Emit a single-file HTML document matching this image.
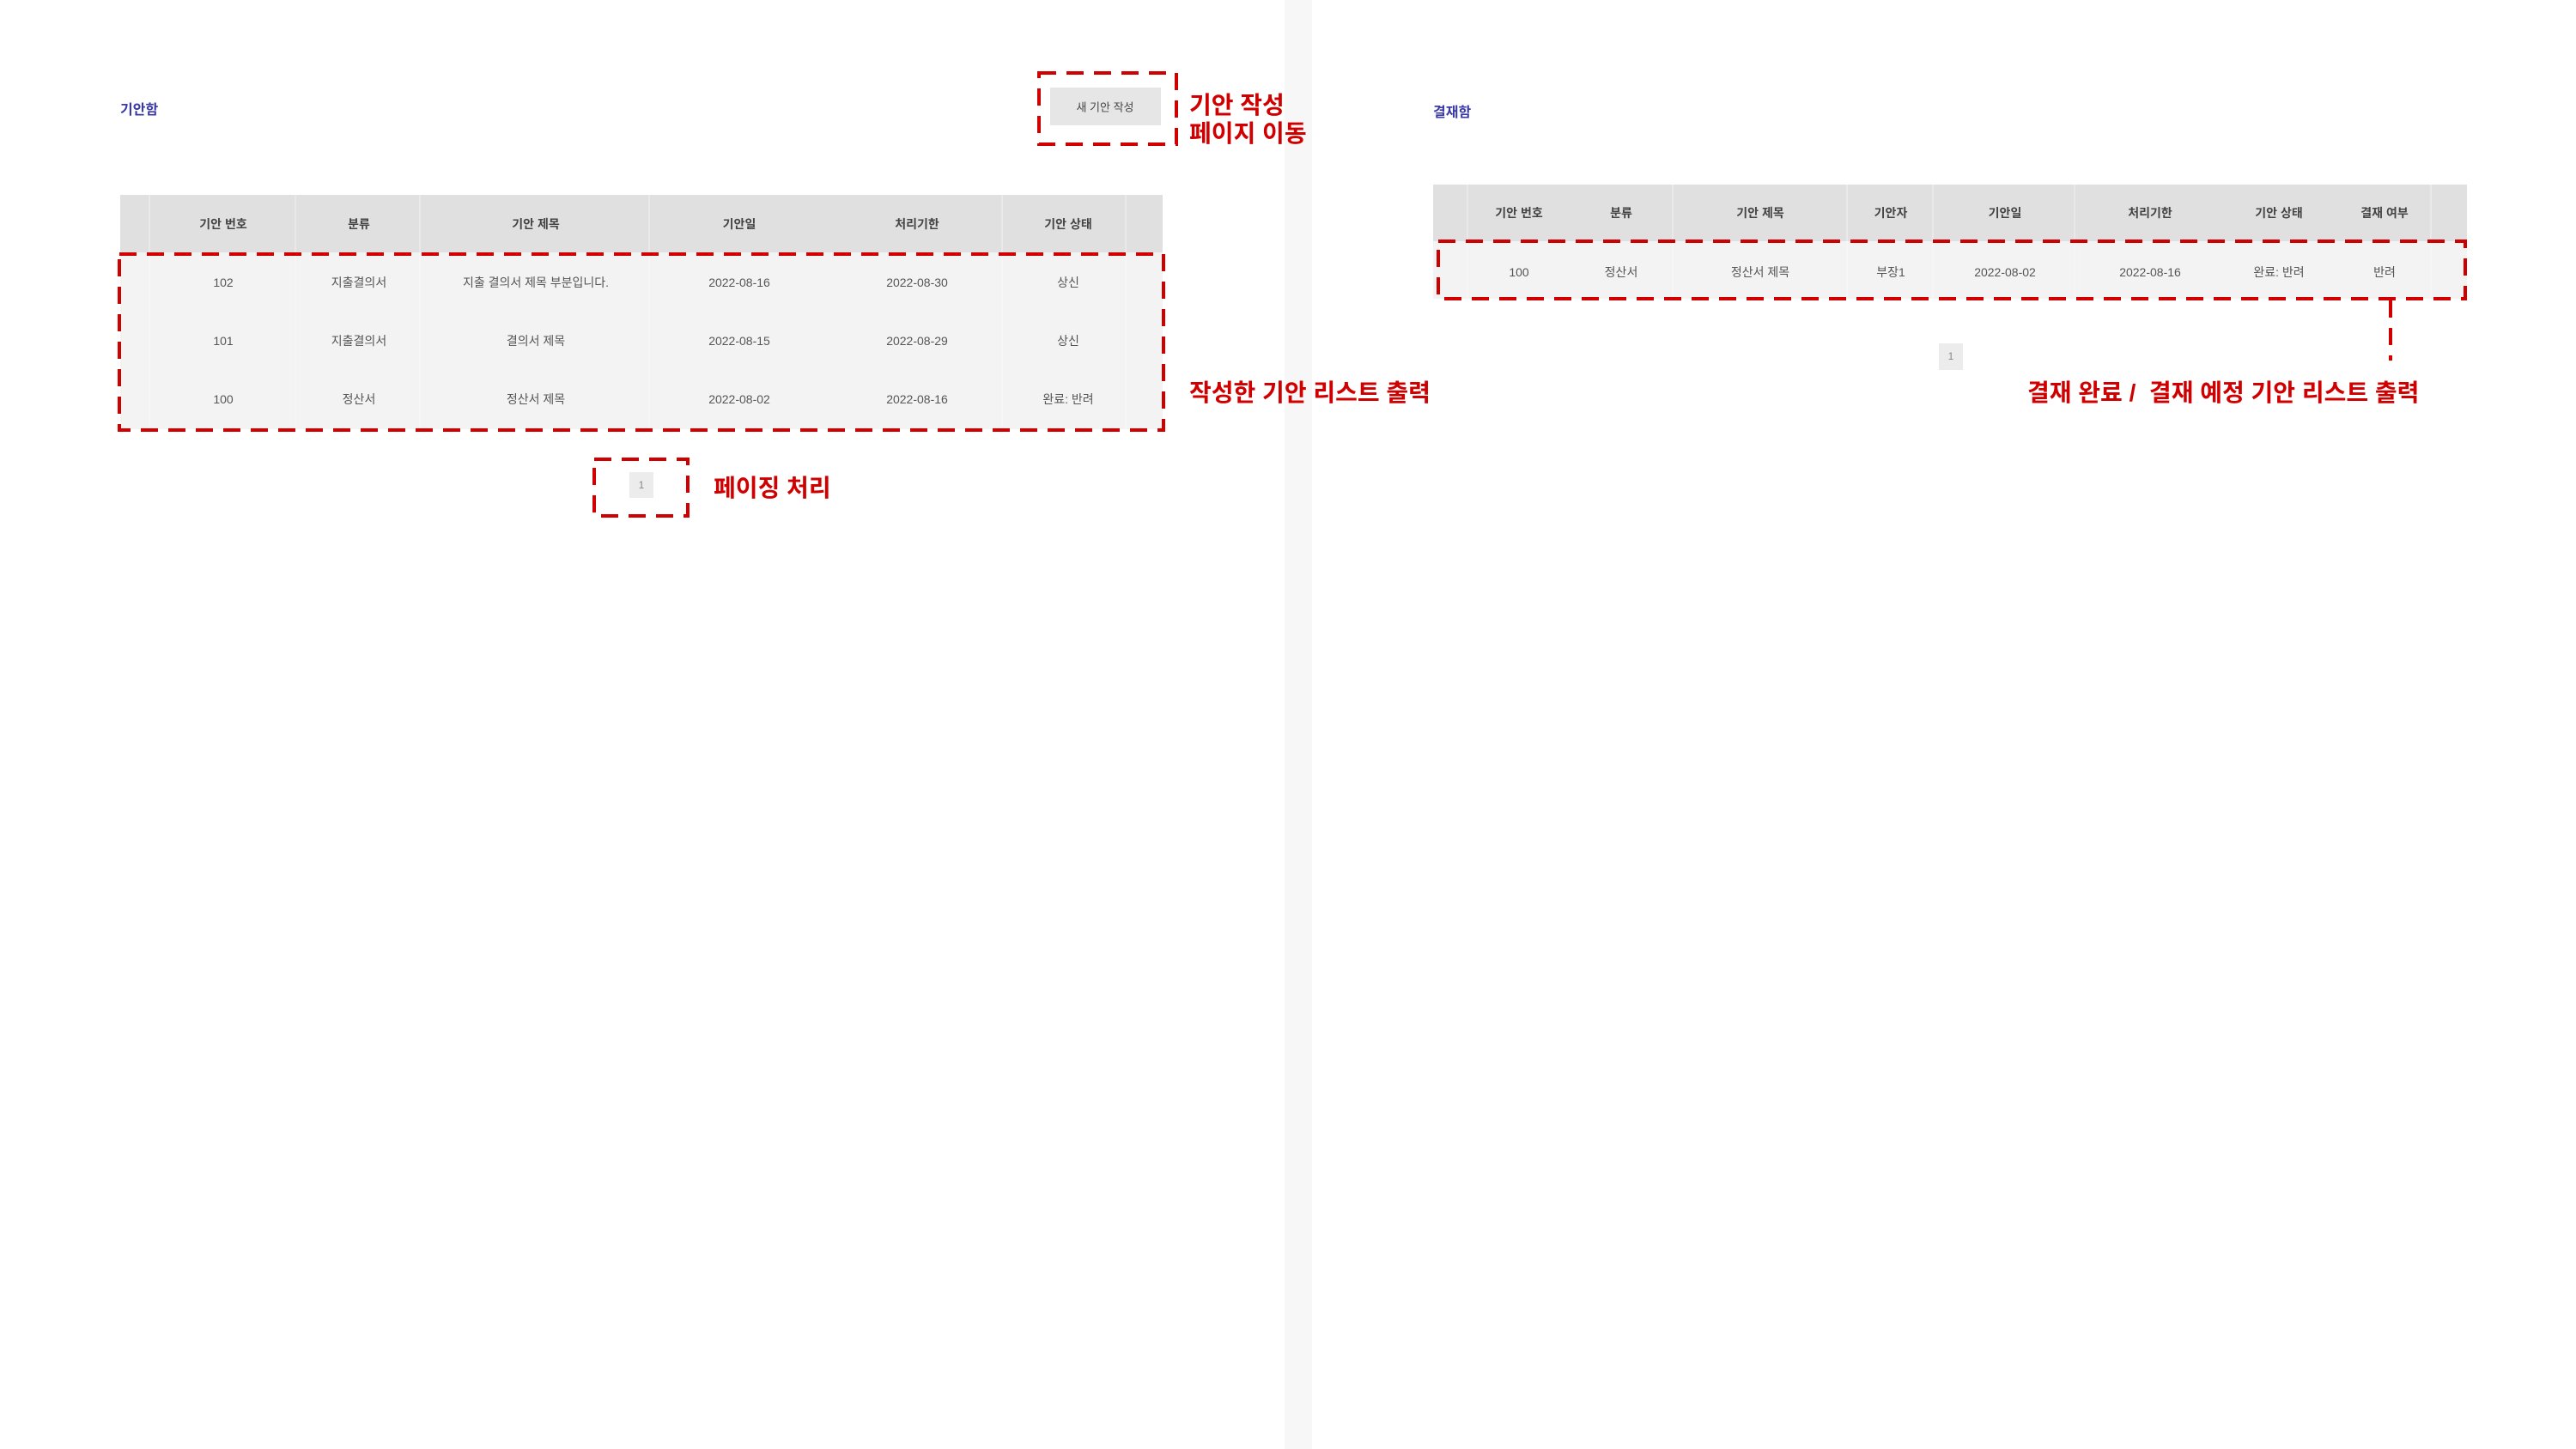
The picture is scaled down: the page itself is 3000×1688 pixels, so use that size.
<!DOCTYPE html>
<html><head><meta charset="utf-8"><style>
*{margin:0;padding:0;box-sizing:border-box}
body{width:3000px;height:1688px;background:#fff;position:relative;overflow:hidden;font-family:"Liberation Sans","Noto Sans CJK KR",sans-serif}
.a{position:absolute;white-space:nowrap}
.t{color:#3a3aa8;font-weight:bold;font-size:16px}
.c{position:absolute;transform:translate(-50%,-50%);white-space:nowrap;font-size:14px;color:#555}
.h{font-weight:bold;color:#444}
.r{color:#d10000;font-size:28px;font-weight:bold}
.bg{position:absolute}
.cl{position:absolute;width:2px;background:rgba(255,255,255,0.3)}
</style></head><body>
<div class="bg" style="left:1496px;top:0;width:32px;height:1688px;background:#f7f7f7"></div>

<div class="a t" style="left:140px;top:114px">기안함</div>
<div class="bg" style="left:1223px;top:102px;width:129px;height:44px;background:#e6e6e6"></div>
<div class="c" style="left:1287px;top:124px;font-size:13px;color:#444">새 기안 작성</div>
<div class="a r" style="left:1385px;top:106px;line-height:33px">기안 작성<br>페이지 이동</div>

<div class="bg" style="left:140px;top:227px;width:1214px;height:67px;background:#e0e0e0"></div>
<div class="bg" style="left:140px;top:294px;width:1214px;height:206px;background:#f3f3f3"></div>
<div class="cl" style="left:173px;top:227px;height:273px"></div>
<div class="cl" style="left:343px;top:227px;height:273px"></div>
<div class="cl" style="left:488px;top:227px;height:273px"></div>
<div class="cl" style="left:755px;top:227px;height:273px"></div>
<div class="cl" style="left:1166px;top:227px;height:273px"></div>
<div class="cl" style="left:1310px;top:227px;height:273px"></div>

<div class="c h" style="left:260px;top:261px">기안 번호</div>
<div class="c h" style="left:418px;top:261px">분류</div>
<div class="c h" style="left:624px;top:261px">기안 제목</div>
<div class="c h" style="left:861px;top:261px">기안일</div>
<div class="c h" style="left:1068px;top:261px">처리기한</div>
<div class="c h" style="left:1244px;top:261px">기안 상태</div>

<div class="c" style="left:260px;top:329px">102</div>
<div class="c" style="left:418px;top:329px">지출결의서</div>
<div class="c" style="left:624px;top:329px">지출 결의서 제목 부분입니다.</div>
<div class="c" style="left:861px;top:329px">2022-08-16</div>
<div class="c" style="left:1068px;top:329px">2022-08-30</div>
<div class="c" style="left:1244px;top:329px">상신</div>

<div class="c" style="left:260px;top:397px">101</div>
<div class="c" style="left:418px;top:397px">지출결의서</div>
<div class="c" style="left:624px;top:397px">결의서 제목</div>
<div class="c" style="left:861px;top:397px">2022-08-15</div>
<div class="c" style="left:1068px;top:397px">2022-08-29</div>
<div class="c" style="left:1244px;top:397px">상신</div>

<div class="c" style="left:260px;top:465px">100</div>
<div class="c" style="left:418px;top:465px">정산서</div>
<div class="c" style="left:624px;top:465px">정산서 제목</div>
<div class="c" style="left:861px;top:465px">2022-08-02</div>
<div class="c" style="left:1068px;top:465px">2022-08-16</div>
<div class="c" style="left:1244px;top:465px">완료: 반려</div>

<div class="a r" style="left:1385px;top:436px">작성한 기안 리스트 출력</div>
<div class="bg" style="left:733px;top:550px;width:28px;height:30px;background:#ececec"></div>
<div class="c" style="left:747px;top:565px;font-size:12px;color:#888">1</div>
<div class="a r" style="left:831px;top:547px">페이징 처리</div>

<div class="a t" style="left:1669px;top:117px">결재함</div>
<div class="bg" style="left:1669px;top:215px;width:1204px;height:66px;background:#e0e0e0"></div>
<div class="bg" style="left:1669px;top:281px;width:1204px;height:67px;background:#f3f3f3"></div>
<div class="cl" style="left:1708px;top:215px;height:133px"></div>
<div class="cl" style="left:1947px;top:215px;height:133px"></div>
<div class="cl" style="left:2150px;top:215px;height:133px"></div>
<div class="cl" style="left:2250px;top:215px;height:133px"></div>
<div class="cl" style="left:2415px;top:215px;height:133px"></div>
<div class="cl" style="left:2830px;top:215px;height:133px"></div>

<div class="c h" style="left:1769px;top:248px">기안 번호</div>
<div class="c h" style="left:1888px;top:248px">분류</div>
<div class="c h" style="left:2050px;top:248px">기안 제목</div>
<div class="c h" style="left:2202px;top:248px">기안자</div>
<div class="c h" style="left:2335px;top:248px">기안일</div>
<div class="c h" style="left:2504px;top:248px">처리기한</div>
<div class="c h" style="left:2654px;top:248px">기안 상태</div>
<div class="c h" style="left:2777px;top:248px">결재 여부</div>

<div class="c" style="left:1769px;top:317px">100</div>
<div class="c" style="left:1888px;top:317px">정산서</div>
<div class="c" style="left:2050px;top:317px">정산서 제목</div>
<div class="c" style="left:2202px;top:317px">부장1</div>
<div class="c" style="left:2335px;top:317px">2022-08-02</div>
<div class="c" style="left:2504px;top:317px">2022-08-16</div>
<div class="c" style="left:2654px;top:317px">완료: 반려</div>
<div class="c" style="left:2777px;top:317px">반려</div>

<div class="bg" style="left:2258px;top:400px;width:28px;height:31px;background:#ececec"></div>
<div class="c" style="left:2272px;top:415px;font-size:12px;color:#888">1</div>
<div class="a r" style="left:2361px;top:436px">결재 완료 /&nbsp; 결재 예정 기안 리스트 출력</div>

<svg class="bg" style="left:0;top:0" width="3000" height="1688">
<g fill="none" stroke="#d10000" stroke-width="4" stroke-dasharray="20 12">
<rect x="1210" y="85" width="160" height="83"/>
<rect x="139" y="296" width="1216" height="205"/>
<rect x="692" y="535" width="109" height="66"/>
<rect x="1675" y="281" width="1196" height="67"/>
<line x1="2784" y1="350" x2="2784" y2="420"/>
</g>
</svg>
</body></html>
